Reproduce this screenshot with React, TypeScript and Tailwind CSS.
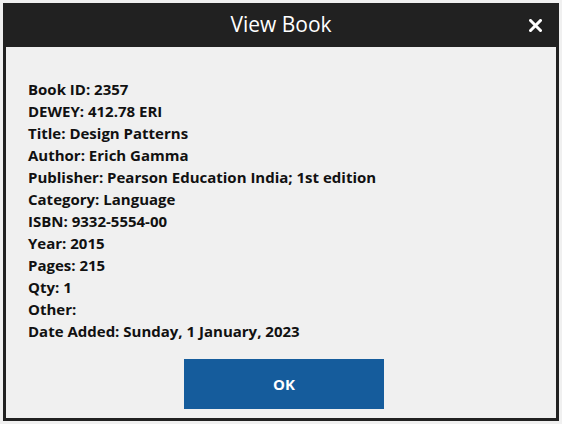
import React from "react";

const rows = [
  "Book ID: 2357",
  "DEWEY: 412.78 ERI",
  "Title: Design Patterns",
  "Author: Erich Gamma",
  "Publisher: Pearson Education India; 1st edition",
  "Category: Language",
  "ISBN: 9332-5554-00",
  "Year: 2015",
  "Pages: 215",
  "Qty: 1",
  "Other:",
  "Date Added: Sunday, 1 January, 2023",
];

export default function App() {
  return (
    <div className="w-[562px] h-[424px] bg-[#f0f0f0] p-[3px]" style={{ fontFamily: '"Open Sans", "Noto Sans", sans-serif' }}>
      <div className="w-[556px] h-[418px] bg-[#212121] px-[3px] pb-[3px] flex flex-col">
        <div className="h-[44px] relative flex items-center justify-center">
          <span className="text-white text-[21px] font-medium">View Book</span>
          <svg className="absolute right-[14px] top-[16px]" width="13" height="13" viewBox="0 0 13 13">
            <path d="M1.5 1.5 L11.5 11.5 M11.5 1.5 L1.5 11.5" stroke="white" strokeWidth="3" strokeLinecap="square" />
          </svg>
        </div>
        <div className="flex-1 bg-[#f0f0f0] flex flex-col">
          <div className="pl-[22px] pt-[31px] flex flex-col">
            {rows.map((r) => (
              <div key={r} className="h-[22px] leading-[22px] text-[15px] font-bold text-[#111]">
                {r}
              </div>
            ))}
          </div>
          <div className="flex justify-center mt-[17px] pl-[6px]">
            <button className="w-[200px] h-[50px] bg-[#155c9c] text-white text-[15px] font-bold">OK</button>
          </div>
        </div>
      </div>
    </div>
  );
}
